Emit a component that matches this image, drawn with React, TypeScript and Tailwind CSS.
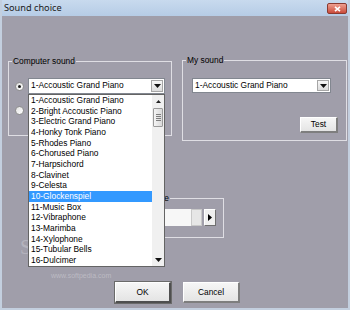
import React from 'react';

const sounds = [
  '1-Accoustic Grand Piano',
  '2-Bright Accoustic Piano',
  '3-Electric Grand Piano',
  '4-Honky Tonk Piano',
  '5-Rhodes Piano',
  '6-Chorused Piano',
  '7-Harpsichord',
  '8-Clavinet',
  '9-Celesta',
  '10-Glockenspiel',
  '11-Music Box',
  '12-Vibraphone',
  '13-Marimba',
  '14-Xylophone',
  '15-Tubular Bells',
  '16-Dulcimer',
];

function Tri({ dir }: { dir: 'down' | 'up' | 'right' }) {
  if (dir === 'up')
    return (
      <svg width="5" height="3" viewBox="0 0 5 3">
        <path d="M2.5 0L5 3H0z" fill="#222" />
      </svg>
    );
  if (dir === 'right')
    return (
      <svg width="4" height="7" viewBox="0 0 4 7">
        <path d="M0 0l4 3.5L0 7z" fill="#000" />
      </svg>
    );
  return (
    <svg width="7" height="4" viewBox="0 0 7 4">
      <path d="M0 0h7L3.5 4z" fill="#111" />
    </svg>
  );
}

function Combo({ className }: { className: string }) {
  return (
    <div className={`flex items-stretch bg-white border border-[#828790] ${className}`}>
      <span className="flex-1 pl-[2px] leading-[13px] whitespace-nowrap overflow-hidden">1-Accoustic Grand Piano</span>
      <span className="w-[12px] m-[1px] flex items-center justify-center bg-gradient-to-b from-[#f7f7f7] to-[#dcdcdc] border border-[#a6a6a6]">
        <Tri dir="down" />
      </span>
    </div>
  );
}

function Radio({ checked }: { checked?: boolean }) {
  return (
    <span className="w-[9px] h-[9px] rounded-full border border-[#8f8f8f] bg-gradient-to-br from-[#e2e2e2] to-white flex items-center justify-center">
      {checked && <span className="w-[3px] h-[3px] rounded-full bg-[#1b1b1b]" />}
    </span>
  );
}

function Button({ label, primary }: { label: string; primary?: boolean }) {
  return (
    <button
      className={`w-full h-full flex items-center justify-center bg-gradient-to-b from-[#f6f6f6] to-[#e4e4e4] border-t border-l border-t-white border-l-white border-b-2 border-r-2 ${
        primary
          ? 'border-b-[#4f4f4f] border-r-[#4f4f4f] outline outline-1 outline-[#6a6a6a]'
          : 'border-b-[#7e7e7e] border-r-[#7e7e7e]'
      }`}
    >
      {label}
    </button>
  );
}

export default function App() {
  return (
    <div className="w-[350px] h-[310px] flex flex-col bg-[#a09eaa] border-l-2 border-r-2 border-b-2 border-[#c3cfdf] font-['Liberation_Sans',Arial,sans-serif] text-[8.4px] text-black overflow-hidden">
      {/* Title bar */}
      <div className="h-[16px] flex items-center justify-between pl-[2px] pr-[1px] bg-gradient-to-b from-[#c8daee] to-[#b6cce6]">
        <span className="font-['Noto_Sans',sans-serif] text-[9.2px] text-[#1b1b1b]">Sound choice</span>
        <span className="w-[20px] h-[11px] mt-[1px] rounded-[2px] border border-[#8a3a30] bg-gradient-to-b from-[#ee9f90] to-[#c94a3b] flex items-center justify-center">
          <svg width="7" height="6" viewBox="0 0 7 6">
            <path d="M1 0.8l5 4.4M6 0.8l-5 4.4" stroke="#fff" strokeWidth="1.6" />
          </svg>
        </span>
      </div>

      {/* Body */}
      <div className="relative flex-1 flex flex-col pt-[39px]">
        {/* Watermark, sits under the open list */}
        <div className="absolute left-[18px] top-[216px] pointer-events-none flex flex-col items-center">
          <span className="font-['Liberation_Serif',serif] text-[21px] tracking-[1px] text-[#c9c8d0] opacity-50">SOFTPEDIA</span>
          <span className="text-[7px] mt-[7px] text-[#c8c7cf] opacity-70">www.softpedia.com</span>
        </div>

        <div className="relative z-10 flex items-start">
          {/* Computer sound */}
          <fieldset className="ml-[6px] mt-[1px] w-[164px] h-[80px] border border-[#dfdee4]">
            <legend className="ml-[3px] px-[1px] leading-[10px]">Computer sound</legend>
            <div className="flex items-center mt-[12px] ml-[6px] gap-[3px]">
              <Radio checked />
              <div className="relative ml-[1px]">
                <Combo className="w-[137px] h-[16px]" />
                {/* Open dropdown list */}
                <div className="absolute left-0 top-full z-10 w-[137px] h-[173px] flex bg-white border border-[#646464]">
                  <div className="flex-1 flex flex-col">
                    {sounds.map((s) => (
                      <div
                        key={s}
                        className={`h-[10.66px] leading-[10.66px] pl-[2px] whitespace-nowrap ${
                          s === '10-Glockenspiel' ? 'bg-[#3399ff] text-white' : ''
                        }`}
                      >
                        {s}
                      </div>
                    ))}
                  </div>
                  <div className="w-[12px] flex flex-col bg-[#f0f0f0]">
                    <div className="h-[13px] flex items-center justify-center">
                      <Tri dir="up" />
                    </div>
                    <div className="h-[19px] mx-[1px] rounded-[1px] border border-[#9a9a9a] bg-gradient-to-r from-[#f4f4f4] to-[#dadada] flex flex-col items-center justify-center gap-[1px]">
                      <span className="w-[5px] h-px bg-[#7d7d7d]" />
                      <span className="w-[5px] h-px bg-[#7d7d7d]" />
                      <span className="w-[5px] h-px bg-[#7d7d7d]" />
                      <span className="w-[5px] h-px bg-[#7d7d7d]" />
                    </div>
                    <div className="flex-1" />
                    <div className="h-[13px] flex items-center justify-center">
                      <Tri dir="down" />
                    </div>
                  </div>
                </div>
              </div>
            </div>
            <div className="mt-[12px] ml-[6px]">
              <Radio />
            </div>
          </fieldset>

          {/* My sound */}
          <fieldset className="ml-[10px] w-[165px] h-[86px] border border-[#dfdee4] flex flex-col">
            <legend className="ml-[3px] px-[1px] leading-[10px]">My sound</legend>
            <div className="ml-[9px] mt-[13px]">
              <Combo className="w-[139px] h-[15px]" />
            </div>
            <div className="flex justify-end mr-[8px] mt-[24px]">
              <div className="w-[38px] h-[16px] flex">
                <Button label="Test" />
              </div>
            </div>
          </fieldset>
        </div>

        {/* Partially hidden group */}
        <fieldset className="ml-[131px] mt-[52px] w-[91px] h-[45px] border border-[#dfdee4]">
          <legend className="ml-[6px] px-[1px] leading-[10px]">Volume</legend>
          <div className="flex justify-end items-stretch mr-[7px] mt-[6px] h-[17px]">
            <span className="w-[50px] bg-[#f7f7f7]" />
            <span className="w-[11px] bg-[#e6e6e6] border border-[#c8c8c8]" />
            <span className="w-[12px] ml-[2px] flex items-center justify-center bg-[#efefef] border-t border-l border-white border-b border-r border-b-[#6f6f6f] border-r-[#6f6f6f]">
              <Tri dir="right" />
            </span>
          </div>
        </fieldset>

        {/* Dialog buttons */}
        <div className="flex gap-[12px] ml-[113px] mt-[44px]">
          <div className="w-[56px] h-[21px] flex">
            <Button label="OK" primary />
          </div>
          <div className="w-[57px] h-[21px] flex">
            <Button label="Cancel" />
          </div>
        </div>
      </div>
    </div>
  );
}
